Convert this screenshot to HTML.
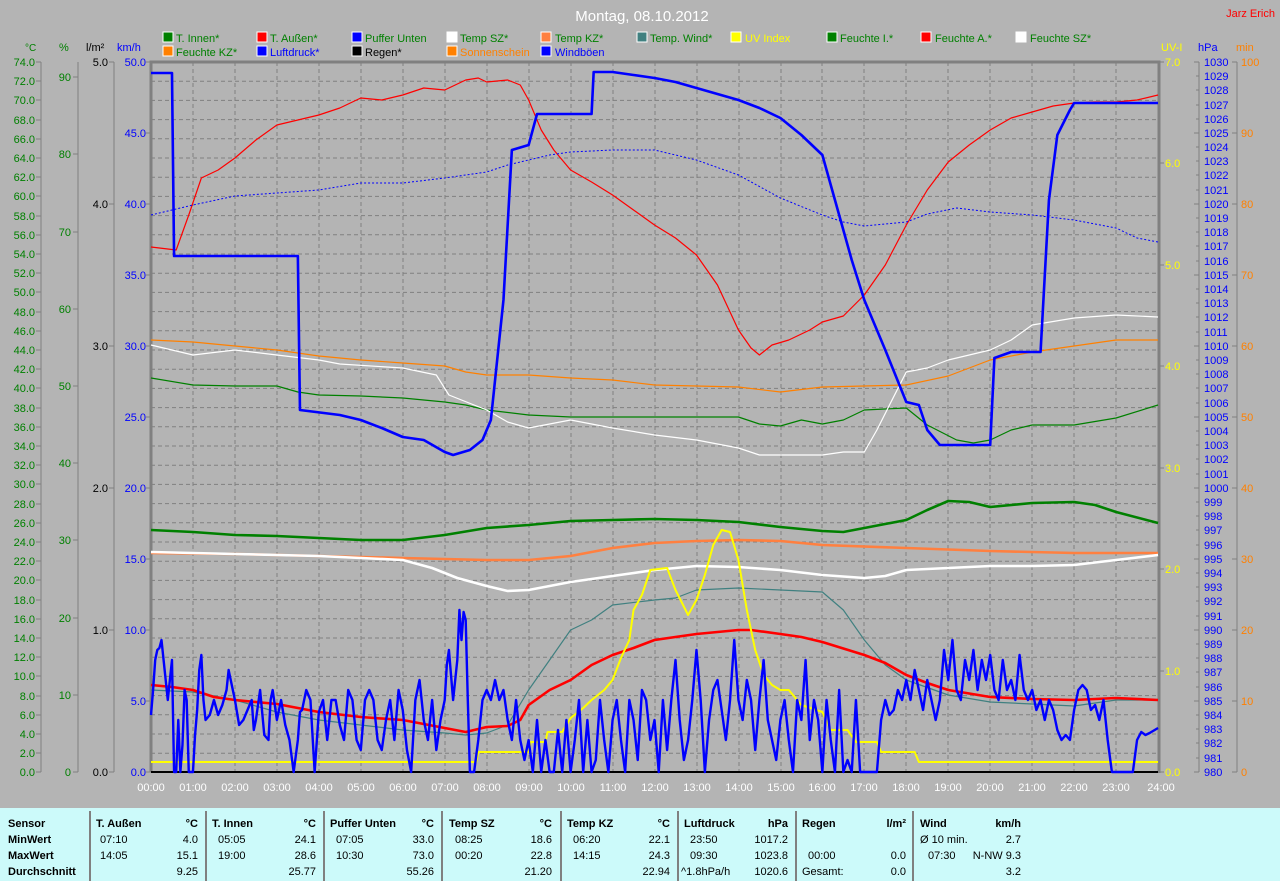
<!DOCTYPE html>
<html><head><meta charset="utf-8"><style>
html,body{margin:0;padding:0;background:#b4b4b4;}
svg{display:block;font-family:"Liberation Sans",Arial,sans-serif;}
.tb{font-family:"Liberation Sans",Arial,sans-serif;font-size:11px;}
</style></head><body>
<svg width="1280" height="881" viewBox="0 0 1280 881" xmlns="http://www.w3.org/2000/svg">
<rect width="1280" height="881" fill="#b4b4b4"/>
<text x="642" y="21" font-size="15" fill="#ffffff" text-anchor="middle">Montag, 08.10.2012</text>
<text x="1275" y="17" font-size="11" fill="#ff0000" text-anchor="end">Jarz Erich</text>

<!-- legend -->
<g font-size="11">
<g stroke="#fff" stroke-width="1">
<rect x="163" y="32" width="10" height="10" fill="#008000"/>
<rect x="257" y="32" width="10" height="10" fill="#ff0000"/>
<rect x="352" y="32" width="10" height="10" fill="#0000ff"/>
<rect x="447" y="32" width="10" height="10" fill="#ffffff"/>
<rect x="541" y="32" width="10" height="10" fill="#ff8040"/>
<rect x="637" y="32" width="10" height="10" fill="#408080"/>
<rect x="731" y="32" width="10" height="10" fill="#ffff00"/>
<rect x="827" y="32" width="10" height="10" fill="#008000"/>
<rect x="921" y="32" width="10" height="10" fill="#ff0000"/>
<rect x="1016" y="32" width="10" height="10" fill="#ffffff"/>
<rect x="163" y="46" width="10" height="10" fill="#ff8000"/>
<rect x="257" y="46" width="10" height="10" fill="#0000ff"/>
<rect x="352" y="46" width="10" height="10" fill="#000000"/>
<rect x="447" y="46" width="10" height="10" fill="#ff8000"/>
<rect x="541" y="46" width="10" height="10" fill="#0000ff"/>
</g>
<text x="176" y="42" fill="#008000">T. Innen*</text>
<text x="270" y="42" fill="#008000">T. Außen*</text>
<text x="365" y="42" fill="#008000">Puffer Unten</text>
<text x="460" y="42" fill="#008000">Temp SZ*</text>
<text x="555" y="42" fill="#008000">Temp KZ*</text>
<text x="650" y="42" fill="#008000">Temp. Wind*</text>
<text x="745" y="42" fill="#ffff00">UV Index</text>
<text x="840" y="42" fill="#008000">Feuchte I.*</text>
<text x="935" y="42" fill="#008000">Feuchte A.*</text>
<text x="1030" y="42" fill="#008000">Feuchte SZ*</text>
<text x="176" y="56" fill="#008000">Feuchte KZ*</text>
<text x="270" y="56" fill="#0000ff">Luftdruck*</text>
<text x="365" y="56" fill="#000000">Regen*</text>
<text x="460" y="56" fill="#ff8000">Sonnenschein</text>
<text x="555" y="56" fill="#0000ff">Windböen</text>
</g>

<!-- unit labels -->
<g font-size="11">
<text x="25" y="51" fill="#008000" font-size="10">°C</text>
<text x="59" y="51" fill="#008000">%</text>
<text x="86" y="51" fill="#000">l/m²</text>
<text x="117" y="51" fill="#0000ff">km/h</text>
<text x="1161" y="51" fill="#ffff00">UV-I</text>
<text x="1198" y="51" fill="#0000ff">hPa</text>
<text x="1236" y="51" fill="#ff8000">min</text>
</g>

<!-- grid -->
<g stroke="#808080" stroke-width="1" stroke-dasharray="4,3">
<path id="hg" d="M151 81.2H1158M151 100.4H1158M151 119.6H1158M151 138.8H1158M151 158H1158M151 177.2H1158M151 196.4H1158M151 215.6H1158M151 234.8H1158M151 254H1158M151 273.2H1158M151 292.4H1158M151 311.6H1158M151 330.8H1158M151 350H1158M151 369.2H1158M151 388.4H1158M151 407.6H1158M151 426.8H1158M151 446H1158M151 465.2H1158M151 484.4H1158M151 503.6H1158M151 522.8H1158M151 542H1158M151 561.2H1158M151 580.4H1158M151 599.6H1158M151 618.8H1158M151 638H1158M151 657.2H1158M151 676.4H1158M151 695.6H1158M151 714.8H1158M151 734H1158M151 753.2H1158"/>
<path d="M193 62V772M235 62V772M277 62V772M319 62V772M361 62V772M403 62V772M445 62V772M487 62V772M529 62V772M571 62V772M613 62V772M655 62V772M697 62V772M739 62V772M781 62V772M822 62V772M864 62V772M906 62V772M948 62V772M990 62V772M1032 62V772M1074 62V772M1116 62V772"/>
</g>
<path d="M151 772V62H1159V773" fill="none" stroke="#808080" stroke-width="3"/>
<line x1="151" y1="772" x2="1158" y2="772" stroke="#000" stroke-width="2"/>

<!-- axes lines -->
<g stroke="#808080" stroke-width="1" fill="none">
<line x1="41" y1="62" x2="41" y2="772"/>
<line x1="78" y1="62" x2="78" y2="772"/>
<line x1="114" y1="62" x2="114" y2="772"/>
<line x1="1199" y1="62" x2="1199" y2="772"/>
<line x1="1237" y1="62" x2="1237" y2="772"/>
</g>

<!-- °C axis -->
<g font-size="11" fill="#008000" text-anchor="end">
<text x="35" y="66">74.0</text><text x="35" y="85">72.0</text><text x="35" y="104">70.0</text><text x="35" y="124">68.0</text><text x="35" y="143">66.0</text><text x="35" y="162">64.0</text><text x="35" y="181">62.0</text><text x="35" y="200">60.0</text><text x="35" y="220">58.0</text><text x="35" y="239">56.0</text><text x="35" y="258">54.0</text><text x="35" y="277">52.0</text><text x="35" y="296">50.0</text><text x="35" y="316">48.0</text><text x="35" y="335">46.0</text><text x="35" y="354">44.0</text><text x="35" y="373">42.0</text><text x="35" y="392">40.0</text><text x="35" y="412">38.0</text><text x="35" y="431">36.0</text><text x="35" y="450">34.0</text><text x="35" y="469">32.0</text><text x="35" y="488">30.0</text><text x="35" y="508">28.0</text><text x="35" y="527">26.0</text><text x="35" y="546">24.0</text><text x="35" y="565">22.0</text><text x="35" y="584">20.0</text><text x="35" y="604">18.0</text><text x="35" y="623">16.0</text><text x="35" y="642">14.0</text><text x="35" y="661">12.0</text><text x="35" y="680">10.0</text><text x="35" y="700">8.0</text><text x="35" y="719">6.0</text><text x="35" y="738">4.0</text><text x="35" y="757">2.0</text><text x="35" y="776">0.0</text>
</g>
<g stroke="#808080"><path d="M36 62h5M36 81h5M36 100h5M36 120h5M36 139h5M36 158h5M36 177h5M36 196h5M36 216h5M36 235h5M36 254h5M36 273h5M36 292h5M36 312h5M36 331h5M36 350h5M36 369h5M36 388h5M36 408h5M36 427h5M36 446h5M36 465h5M36 484h5M36 504h5M36 523h5M36 542h5M36 561h5M36 580h5M36 600h5M36 619h5M36 638h5M36 657h5M36 676h5M36 696h5M36 715h5M36 734h5M36 753h5M36 772h5"/>
<path d="M73 77h5M73 154h5M73 232h5M73 309h5M73 386h5M73 463h5M73 540h5M73 618h5M73 695h5M73 772h5"/>
<path d="M109 62h5M109 204h5M109 346h5M109 488h5M109 630h5M109 772h5"/>
<path d="M146 62h5M146 133h5M146 204h5M146 275h5M146 346h5M146 417h5M146 488h5M146 559h5M146 630h5M146 701h5M146 772h5"/>
<path d="M1159 62h5M1159 163h5M1159 265h5M1159 366h5M1159 468h5M1159 569h5M1159 671h5M1159 772h5"/>
<path d="M1232 62h5M1232 133h5M1232 204h5M1232 275h5M1232 346h5M1232 417h5M1232 488h5M1232 559h5M1232 630h5M1232 701h5M1232 772h5"/>
</g>
<!-- % axis -->
<g font-size="11" fill="#008000" text-anchor="end">
<text x="71" y="81">90</text><text x="71" y="158">80</text><text x="71" y="236">70</text><text x="71" y="313">60</text><text x="71" y="390">50</text><text x="71" y="467">40</text><text x="71" y="544">30</text><text x="71" y="622">20</text><text x="71" y="699">10</text><text x="71" y="776">0</text>
</g>
<g font-size="11" fill="#000" text-anchor="end">
<text x="108" y="66">5.0</text><text x="108" y="208">4.0</text><text x="108" y="350">3.0</text><text x="108" y="492">2.0</text><text x="108" y="634">1.0</text><text x="108" y="776">0.0</text>
</g>
<g font-size="11" fill="#0000ff" text-anchor="end">
<text x="146" y="66">50.0</text><text x="146" y="137">45.0</text><text x="146" y="208">40.0</text><text x="146" y="279">35.0</text><text x="146" y="350">30.0</text><text x="146" y="421">25.0</text><text x="146" y="492">20.0</text><text x="146" y="563">15.0</text><text x="146" y="634">10.0</text><text x="146" y="705">5.0</text><text x="146" y="776">0.0</text>
</g>
<g font-size="11" fill="#ffff00">
<text x="1165" y="66">7.0</text><text x="1165" y="167">6.0</text><text x="1165" y="269">5.0</text><text x="1165" y="370">4.0</text><text x="1165" y="472">3.0</text><text x="1165" y="573">2.0</text><text x="1165" y="675">1.0</text><text x="1165" y="776">0.0</text>
</g>
<g font-size="11" fill="#ff8000">
<text x="1241" y="66">100</text><text x="1241" y="137">90</text><text x="1241" y="208">80</text><text x="1241" y="279">70</text><text x="1241" y="350">60</text><text x="1241" y="421">50</text><text x="1241" y="492">40</text><text x="1241" y="563">30</text><text x="1241" y="634">20</text><text x="1241" y="705">10</text><text x="1241" y="776">0</text>
</g>
<g font-size="11" fill="#0000ff" id="hpa"></g>

<!-- time labels -->
<g font-size="11" fill="#ffffff" text-anchor="middle">
<text x="151" y="791">00:00</text><text x="193" y="791">01:00</text><text x="235" y="791">02:00</text><text x="277" y="791">03:00</text><text x="319" y="791">04:00</text><text x="361" y="791">05:00</text><text x="403" y="791">06:00</text><text x="445" y="791">07:00</text><text x="487" y="791">08:00</text><text x="529" y="791">09:00</text><text x="571" y="791">10:00</text><text x="613" y="791">11:00</text><text x="655" y="791">12:00</text><text x="697" y="791">13:00</text><text x="739" y="791">14:00</text><text x="781" y="791">15:00</text><text x="822" y="791">16:00</text><text x="864" y="791">17:00</text><text x="906" y="791">18:00</text><text x="948" y="791">19:00</text><text x="990" y="791">20:00</text><text x="1032" y="791">21:00</text><text x="1074" y="791">22:00</text><text x="1116" y="791">23:00</text><text x="1161" y="791">24:00</text>
</g>

<!-- curves -->
<g transform="translate(151,0) scale(41.96,1)" fill="none" stroke-linejoin="round">
<!-- Feuchte KZ orange thin -->
<polyline vector-effect="non-scaling-stroke" stroke="#ff8000" stroke-width="1.2" points="0,340 1,342 2,346 3,350 4,356 5,360 6,363 7,366 7.5,372 8,375 9,375 10,378 11,380 12,385 13,386 14,387 15,392 16,387 17,386 18,385 19,376 20,360 21,352 22,346 23,340 24,340"/>
<!-- Feuchte I green thin -->
<polyline vector-effect="non-scaling-stroke" stroke="#008000" stroke-width="1.2" points="0,378 1,385 2,386 3,386 3.5,392 4,395 5,396 6,398 7,402 7.5,405 8,410 9,415 10,417 12,417 13,417 14,417 14.5,424 15,426 15.5,420 16,424 16.5,420 17,410 18,408 18.5,425 19.2,440 19.6,443 20,440 20.5,430 21,425 22,425 23,418 24,405"/>
<!-- Feuchte SZ white thin -->
<polyline vector-effect="non-scaling-stroke" stroke="#ffffff" stroke-width="1.2" points="0,345 0.5,350 1,355 2,350 3,355 4,360 4.5,364 6,368 6.8,375 7.1,395 7.4,400 8,410 8.5,422 9,428 9.5,424 10,420 11,428 12,435 13,440 14,448 14.5,455 15,455 16,455 16.5,452 17,452 17.3,430 17.6,405 18,372 18.5,368 19,360 20,350 20.5,340 21,325 22,318 23,315 24,317"/>
<!-- Feuchte A red thin -->
<polyline vector-effect="non-scaling-stroke" stroke="#ff0000" stroke-width="1.2" points="0,247 0.6,250 0.9,215 1.2,178 1.6,170 2,158 2.5,140 3,125 3.5,120 4,115 4.5,108 5,98 5.5,100 6,95 6.5,88 7,90 7.5,80 7.8,78 8,82 8.5,80 8.8,85 9,100 9.3,130 9.6,150 10,170 10.5,182 11,195 11.5,210 12,225 12.5,238 13,255 13.5,285 14,330 14.3,348 14.5,355 14.8,345 15.2,340 15.7,330 16,322 16.5,316 17,295 17.5,265 18,225 18.5,190 19,162 19.5,145 20,130 20.5,118 21,112 21.5,106 22,103 22.5,102 23,102 23.5,100 24,95"/>
<!-- Luftdruck blue dotted -->
<polyline vector-effect="non-scaling-stroke" stroke="#0000ff" stroke-width="1" stroke-dasharray="2,2" points="0,215 1,205 2,196 3,193 4,190 5,183 6,183 7,178 8,172 8.5,165 9,160 9.5,155 10,152 11,150 12,150 12.5,155 13,160 14,175 15,198 16,215 16.5,222 17,226 18,222 18.5,214 19.2,208 20,212 21,215 22,220 23,228 23.5,238 24,242"/>
<!-- Puffer blue thick -->
<polyline vector-effect="non-scaling-stroke" stroke="#0000ff" stroke-width="2.6" points="0,73 0.5,73 0.55,256 3.5,256 3.55,410 4.5,415 5,420 5.5,428 6,437 6.5,440 7,452 7.2,455 7.6,450 7.9,440 8.1,420 8.4,300 8.6,150 9,145 9.2,114 10.5,114 10.55,72 11,72 11.5,75 12,78 12.5,82 13,88 13.5,94 14,100 14.5,108 15,118 15.5,135 16,155 16.3,200 16.7,260 17,300 17.5,350 18,402 18.3,405 18.5,430 18.8,445 20,445 20.1,358 20.5,352 21.2,352 21.4,200 21.6,135 21.9,110 22,103 24,103"/>
<!-- T. Innen green thick -->
<polyline vector-effect="non-scaling-stroke" stroke="#008000" stroke-width="2.6" points="0,530 1,532 2,535 3,536 4,538 5,540 6,540 7,535 8,528 9,525 10,521 11,520 12,519 13,520 14,522 15,527 16,531 16.5,532 17,528 18,520 18.5,510 19,501 19.5,502 20,507 21,503 22,502 22.5,505 23,512 24,523"/>
<!-- Temp KZ coral thick -->
<polyline vector-effect="non-scaling-stroke" stroke="#ff8040" stroke-width="2.6" points="0,553 2,554 4,556 6,558 7,559 8,560 9,560 10,556 11,548 12,543 13,541 14,540 15,541 16,545 18,548 20,551 22,553 24,553"/>
<!-- Temp SZ white thick -->
<polyline vector-effect="non-scaling-stroke" stroke="#ffffff" stroke-width="2.6" points="0,552 2,554 4,556 6,560 6.7,568 7.3,578 8,586 8.5,591 9,590 9.5,586 10,582 11,576 12,570 13,566 14,567 15,570 16,575 17,578 17.5,576 18,570 19,568 20,566 21,566 22,565 23,560 24,555"/>
<!-- Temp Wind teal -->
<polyline vector-effect="non-scaling-stroke" stroke="#408080" stroke-width="1.2" points="0,690 1,692 2,700 3,712 4,720 5,725 6,730 7,733 7.5,735 8,733 8.5,725 9,690 9.5,660 10,630 10.5,620 11,605 12,600 12.5,598 13,590 14,588 15,590 16,592 16.5,610 17,640 17.5,665 18,680 19,695 20,702 21,704 22,706 23,700 24,700"/>
<!-- T. Außen red thick -->
<polyline vector-effect="non-scaling-stroke" stroke="#ff0000" stroke-width="2.6" points="0,685 0.5,687 1,690 1.5,697 2,700 3,704 3.5,708 4,712 5,717 6,720 7,728 7.5,732 8,727 8.5,726 8.8,720 9,705 9.5,690 10,680 10.5,665 11,655 11.5,648 12,640 13,634 14,630 14.3,630 15,634 15.5,637 16,642 17,655 17.5,663 18,675 18.5,683 19,690 20,697 21,699 22,700 23,698 24,700"/>
<!-- UV yellow -->
<polyline vector-effect="non-scaling-stroke" stroke="#ffff00" stroke-width="2" points="0,762 7.75,762 7.8,752 9,752 9.05,742 9.4,742 9.45,732 9.8,732 10,718 10.3,708 10.5,700 10.8,690 11,680 11.2,658 11.4,640 11.5,610 11.7,595 11.9,570 12.3,568 12.5,590 12.8,615 13,600 13.2,575 13.4,545 13.6,530 13.8,532 14,560 14.2,610 14.4,650 14.6,675 14.8,685 15,690 15.2,690 15.5,705 16,712 16.2,730 16.6,730 16.8,742 17.3,742 17.4,752 18.2,752 18.3,762 24,762"/>
<!-- Windboeen blue -->
<polyline vector-effect="non-scaling-stroke" stroke="#0000ff" stroke-width="2.4" points="0,715 0.05,690 0.1,660 0.15,650 0.2,648 0.25,640 0.3,660 0.35,680 0.4,700 0.45,680 0.5,660 0.55,772 0.6,772 0.65,720 0.7,772 0.75,745 0.8,690 0.85,700 0.9,772 1.0,772 1.05,735 1.1,710 1.15,670 1.2,655 1.25,700 1.3,720 1.4,715 1.5,700 1.6,715 1.7,705 1.8,690 1.85,670 1.9,680 2.0,700 2.1,725 2.2,720 2.3,710 2.4,700 2.45,730 2.5,720 2.6,690 2.7,735 2.8,740 2.85,700 2.9,690 3.0,720 3.1,700 3.2,725 3.3,740 3.4,772 3.5,740 3.55,712 3.6,710 3.7,690 3.8,700 3.9,772 4.0,712 4.1,700 4.2,740 4.3,700 4.4,700 4.5,725 4.6,740 4.7,690 4.8,700 4.9,740 5.0,750 5.1,700 5.2,690 5.3,700 5.4,740 5.5,750 5.6,720 5.7,700 5.8,740 5.9,690 6.0,710 6.1,750 6.2,772 6.3,700 6.4,680 6.5,720 6.6,740 6.7,700 6.8,750 6.9,720 7.0,700 7.05,665 7.1,650 7.2,700 7.3,660 7.35,610 7.4,640 7.45,612 7.5,620 7.55,700 7.6,772 7.7,772 7.8,740 7.9,700 8.0,690 8.1,700 8.2,680 8.3,700 8.4,690 8.5,720 8.6,740 8.7,700 8.8,740 8.9,760 9.0,740 9.1,772 9.2,720 9.3,772 9.4,740 9.5,772 9.6,772 9.7,730 9.8,772 9.9,720 10.0,772 10.1,740 10.2,700 10.3,772 10.4,720 10.5,772 10.6,760 10.7,700 10.8,740 10.9,772 11.0,720 11.1,700 11.2,740 11.3,772 11.4,700 11.5,720 11.6,760 11.7,690 11.8,700 11.9,740 12.0,720 12.1,772 12.2,700 12.3,750 12.4,700 12.5,660 12.6,720 12.7,760 12.8,740 12.9,700 13.0,650 13.1,700 13.2,772 13.3,720 13.4,690 13.5,680 13.6,710 13.7,740 13.8,700 13.9,640 14.0,700 14.1,720 14.2,680 14.3,700 14.4,750 14.5,700 14.6,660 14.7,720 14.8,740 14.9,760 15.0,720 15.1,700 15.2,740 15.3,772 15.4,700 15.5,720 15.6,660 15.7,740 15.8,700 15.9,720 16.0,772 16.1,700 16.2,740 16.3,772 16.4,690 16.5,772 16.6,760 16.7,772 16.8,700 16.9,772 17.0,772 17.3,772 17.4,720 17.5,700 17.6,715 17.7,710 17.8,690 17.9,700 18.0,680 18.1,700 18.2,670 18.3,690 18.4,710 18.5,680 18.6,700 18.7,720 18.8,700 18.9,650 19.0,680 19.1,640 19.2,690 19.3,700 19.4,660 19.5,680 19.6,650 19.7,690 19.8,660 19.9,680 20.0,655 20.1,690 20.2,700 20.3,660 20.4,690 20.5,680 20.6,700 20.7,655 20.8,690 20.9,700 21.0,690 21.1,710 21.2,700 21.3,720 21.4,700 21.5,710 21.6,730 21.7,740 21.8,735 21.9,740 22.0,710 22.1,690 22.2,685 22.3,690 22.4,710 22.5,705 22.6,720 22.7,700 22.8,740 22.9,772 23.0,772 23.4,772 23.5,740 23.6,732 23.7,735 23.8,733 24,728"/>
</g>

<!-- hPa labels -->
<g font-size="11" fill="#0000ff" text-anchor="start">
<text x="1204" y="66">1030</text><text x="1204" y="80">1029</text><text x="1204" y="94">1028</text><text x="1204" y="109">1027</text><text x="1204" y="123">1026</text><text x="1204" y="137">1025</text><text x="1204" y="151">1024</text><text x="1204" y="165">1023</text><text x="1204" y="179">1022</text><text x="1204" y="194">1021</text><text x="1204" y="208">1020</text><text x="1204" y="222">1019</text><text x="1204" y="236">1018</text><text x="1204" y="250">1017</text><text x="1204" y="265">1016</text><text x="1204" y="279">1015</text><text x="1204" y="293">1014</text><text x="1204" y="307">1013</text><text x="1204" y="321">1012</text><text x="1204" y="336">1011</text><text x="1204" y="350">1010</text><text x="1204" y="364">1009</text><text x="1204" y="378">1008</text><text x="1204" y="392">1007</text><text x="1204" y="407">1006</text><text x="1204" y="421">1005</text><text x="1204" y="435">1004</text><text x="1204" y="449">1003</text><text x="1204" y="463">1002</text><text x="1204" y="478">1001</text><text x="1204" y="492">1000</text><text x="1204" y="506">999</text><text x="1204" y="520">998</text><text x="1204" y="534">997</text><text x="1204" y="549">996</text><text x="1204" y="563">995</text><text x="1204" y="577">994</text><text x="1204" y="591">993</text><text x="1204" y="605">992</text><text x="1204" y="620">991</text><text x="1204" y="634">990</text><text x="1204" y="648">989</text><text x="1204" y="662">988</text><text x="1204" y="676">987</text><text x="1204" y="691">986</text><text x="1204" y="705">985</text><text x="1204" y="719">984</text><text x="1204" y="733">983</text><text x="1204" y="747">982</text><text x="1204" y="762">981</text><text x="1204" y="776">980</text>
</g>
<path stroke="#808080" d="M1194 62h5M1194 133h5M1194 204h5M1194 275h5M1194 346h5M1194 417h5M1194 488h5M1194 559h5M1194 630h5M1194 701h5M1194 772h5M1196 76h3M1196 90h3M1196 105h3M1196 119h3M1196 147h3M1196 161h3M1196 175h3M1196 190h3M1196 218h3M1196 232h3M1196 246h3M1196 261h3M1196 289h3M1196 303h3M1196 317h3M1196 332h3M1196 360h3M1196 374h3M1196 388h3M1196 403h3M1196 431h3M1196 445h3M1196 459h3M1196 474h3M1196 502h3M1196 516h3M1196 530h3M1196 545h3M1196 573h3M1196 587h3M1196 601h3M1196 616h3M1196 644h3M1196 658h3M1196 672h3M1196 687h3M1196 715h3M1196 729h3M1196 743h3M1196 758h3"/>

<!-- bottom table -->
<rect x="0" y="808" width="1280" height="73" fill="#ccfafa"/>
<g stroke="#808080" stroke-width="2">
<line x1="90" y1="811" x2="90" y2="881"/><line x1="206" y1="811" x2="206" y2="881"/><line x1="324" y1="811" x2="324" y2="881"/><line x1="442" y1="811" x2="442" y2="881"/><line x1="561" y1="811" x2="561" y2="881"/><line x1="678" y1="811" x2="678" y2="881"/><line x1="796" y1="811" x2="796" y2="881"/><line x1="913" y1="811" x2="913" y2="881"/>
</g>
<g class="tb" fill="#000">
<g font-weight="bold">
<text x="8" y="827">Sensor</text><text x="8" y="843">MinWert</text><text x="8" y="859">MaxWert</text><text x="8" y="875">Durchschnitt</text>
<text x="96" y="827">T. Außen</text><text x="212" y="827">T. Innen</text><text x="330" y="827">Puffer Unten</text><text x="449" y="827">Temp SZ</text><text x="567" y="827">Temp KZ</text><text x="684" y="827">Luftdruck</text><text x="802" y="827">Regen</text><text x="920" y="827">Wind</text>
<g text-anchor="end"><text x="198" y="827">°C</text><text x="316" y="827">°C</text><text x="434" y="827">°C</text><text x="552" y="827">°C</text><text x="670" y="827">°C</text><text x="788" y="827">hPa</text><text x="906" y="827">l/m²</text><text x="1021" y="827">km/h</text></g>
</g>
<text x="100" y="843">07:10</text><text x="100" y="859">14:05</text>
<text x="218" y="843">05:05</text><text x="218" y="859">19:00</text>
<text x="336" y="843">07:05</text><text x="336" y="859">10:30</text>
<text x="455" y="843">08:25</text><text x="455" y="859">00:20</text>
<text x="573" y="843">06:20</text><text x="573" y="859">14:15</text>
<text x="690" y="843">23:50</text><text x="690" y="859">09:30</text><text x="681" y="875">^1.8hPa/h</text>
<text x="808" y="859">00:00</text><text x="802" y="875">Gesamt:</text>
<text x="920" y="843">Ø 10 min.</text><text x="928" y="859">07:30</text>
<g text-anchor="end">
<text x="198" y="843">4.0</text><text x="198" y="859">15.1</text><text x="198" y="875">9.25</text>
<text x="316" y="843">24.1</text><text x="316" y="859">28.6</text><text x="316" y="875">25.77</text>
<text x="434" y="843">33.0</text><text x="434" y="859">73.0</text><text x="434" y="875">55.26</text>
<text x="552" y="843">18.6</text><text x="552" y="859">22.8</text><text x="552" y="875">21.20</text>
<text x="670" y="843">22.1</text><text x="670" y="859">24.3</text><text x="670" y="875">22.94</text>
<text x="788" y="843">1017.2</text><text x="788" y="859">1023.8</text><text x="788" y="875">1020.6</text>
<text x="906" y="859">0.0</text><text x="906" y="875">0.0</text>
<text x="1021" y="843">2.7</text><text x="1021" y="859">N-NW 9.3</text><text x="1021" y="875">3.2</text>
</g>
</g>
</svg>
</body></html>
